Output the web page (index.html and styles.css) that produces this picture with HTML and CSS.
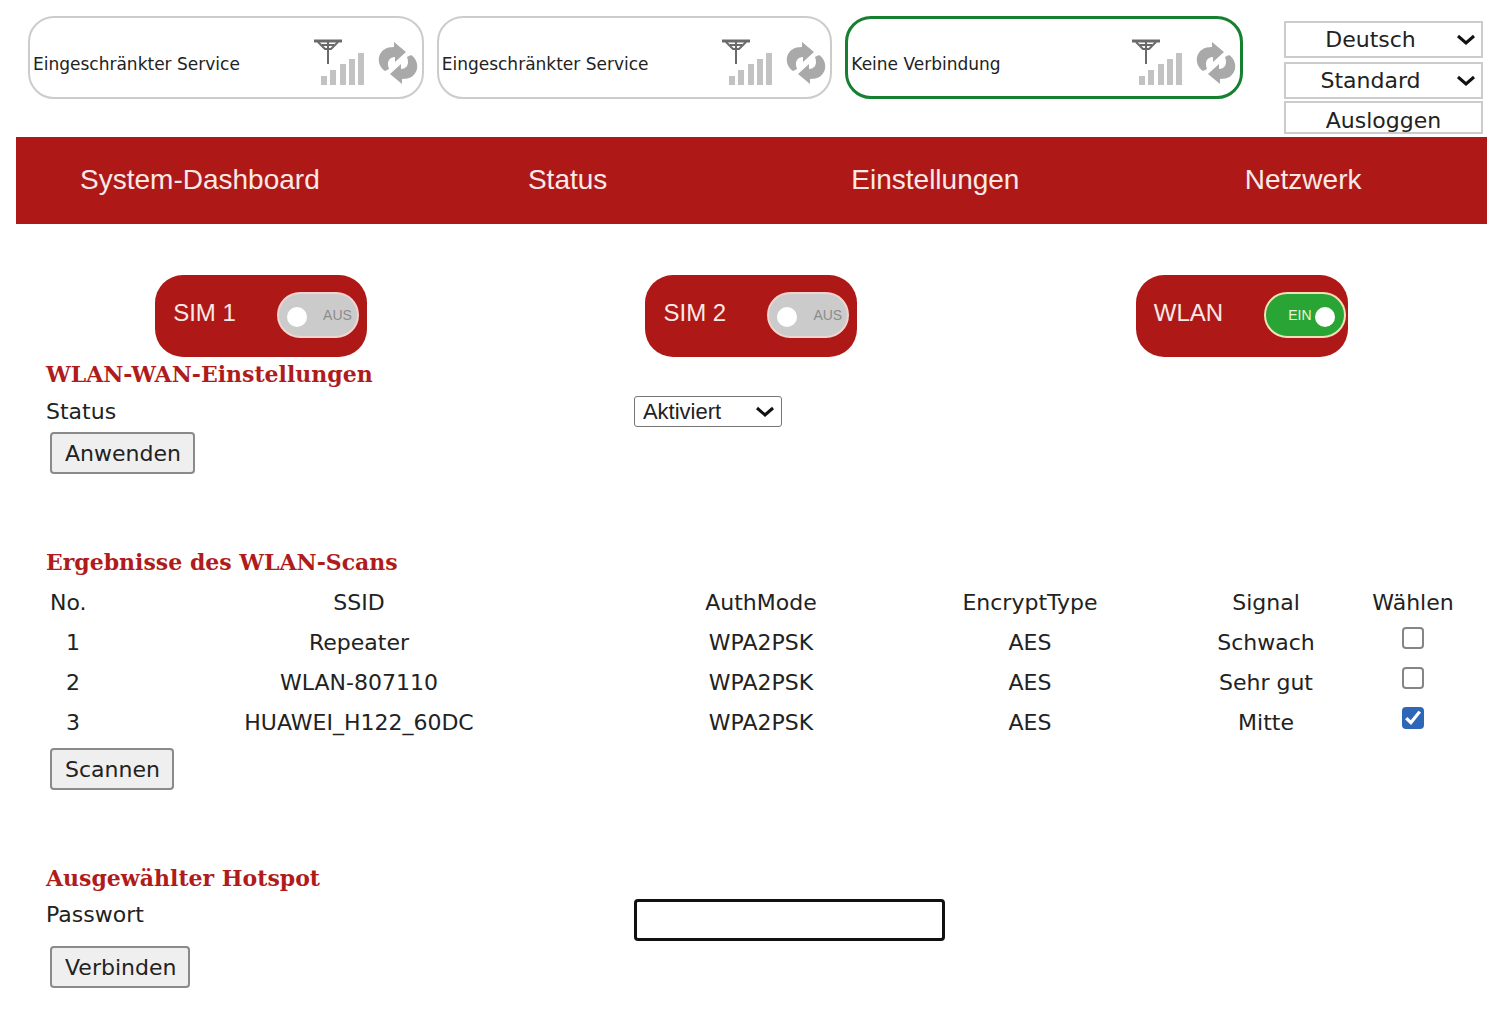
FILE: index.html
```html
<!DOCTYPE html>
<html lang="de">
<head>
<meta charset="utf-8">
<title>WLAN-WAN-Einstellungen</title>
<link rel="stylesheet" href="styles.css">
</head>
<body>
<svg class="sprite" aria-hidden="true">
  <symbol id="antenna" viewBox="0 0 52 48">
    <g fill="none" stroke="#6a6a6a">
      <path stroke-width="3" d="M0 2h28"/>
      <path stroke-width="2" d="M4 3l7 7h6l7-7M14 2v23M8 6h12"/>
    </g>
    <path fill="#c2c2c2" d="M7 37h6v9H7zM16 31h6v15h-6zM26 25h6v21h-6zM35 20h6v26h-6zM44 14h6v32h-6z"/>
  </symbol>
  <symbol id="refresh" viewBox="0 0 40 42">
    <g fill="#a9a9a9">
      <path d="M7 29C2 26 0 20 1 15C3 8 8 5 16 5V0L28 10L17 20V15C12 15 8 19 11 27Z"/>
      <path transform="rotate(180 20 21)" d="M7 29C2 26 0 20 1 15C3 8 8 5 16 5V0L28 10L17 20V15C12 15 8 19 11 27Z"/>
    </g>
  </symbol>
  <symbol id="chevron" viewBox="0 0 18 12">
    <path fill="none" stroke="#111" stroke-width="3" d="M1 2l8 7 8-7"/>
  </symbol>
</svg>
<div class="page">
  <header class="top">
    <div class="link-card">
      <span>Eingeschränkter Service</span>
      <svg class="signal"><use href="#antenna"/></svg>
      <svg class="refresh"><use href="#refresh"/></svg>
    </div>
    <div class="link-card">
      <span>Eingeschränkter Service</span>
      <svg class="signal"><use href="#antenna"/></svg>
      <svg class="refresh"><use href="#refresh"/></svg>
    </div>
    <div class="link-card active">
      <span>Keine Verbindung</span>
      <svg class="signal"><use href="#antenna"/></svg>
      <svg class="refresh"><use href="#refresh"/></svg>
    </div>
    <div class="session">
      <div class="picker">
        <select aria-label="Sprache"><option>Deutsch</option></select>
        <svg class="chevron"><use href="#chevron"/></svg>
      </div>
      <div class="picker">
        <select aria-label="Modus"><option>Standard</option></select>
        <svg class="chevron"><use href="#chevron"/></svg>
      </div>
      <button class="logout" type="button">Ausloggen</button>
    </div>
  </header>

  <nav class="menu">
    <a href="#dashboard">System-Dashboard</a>
    <a href="#status">Status</a>
    <a href="#einstellungen">Einstellungen</a>
    <a href="#netzwerk">Netzwerk</a>
  </nav>

  <div class="interfaces">
    <div class="iface">
      <span id="sim1">SIM 1</span>
      <button class="switch" type="button" role="switch" aria-checked="false" aria-labelledby="sim1"><i></i>AUS</button>
    </div>
    <div class="iface">
      <span id="sim2">SIM 2</span>
      <button class="switch" type="button" role="switch" aria-checked="false" aria-labelledby="sim2"><i></i>AUS</button>
    </div>
    <div class="iface">
      <span id="wlan">WLAN</span>
      <button class="switch" type="button" role="switch" aria-checked="true" aria-labelledby="wlan">EIN<i></i></button>
    </div>
  </div>

  <main>
    <section>
      <h2>WLAN-WAN-Einstellungen</h2>
      <div class="field">
        <label for="state">Status</label>
        <div class="picker state">
          <select id="state"><option>Aktiviert</option></select>
          <svg class="chevron"><use href="#chevron"/></svg>
        </div>
      </div>
      <button class="action" type="button">Anwenden</button>
    </section>

    <section>
      <h2>Ergebnisse des WLAN-Scans</h2>
      <table>
        <colgroup><col class="c-no"><col class="c-ssid"><col class="c-auth"><col class="c-enc"><col class="c-sig"><col class="c-pick"></colgroup>
        <thead>
          <tr><th>No.</th><th>SSID</th><th>AuthMode</th><th>EncryptType</th><th>Signal</th><th>Wählen</th></tr>
        </thead>
        <tbody>
          <tr><td>1</td><td>Repeater</td><td>WPA2PSK</td><td>AES</td><td>Schwach</td><td><input type="checkbox" aria-label="Repeater wählen"></td></tr>
          <tr><td>2</td><td>WLAN-807110</td><td>WPA2PSK</td><td>AES</td><td>Sehr gut</td><td><input type="checkbox" aria-label="WLAN-807110 wählen"></td></tr>
          <tr><td>3</td><td>HUAWEI_H122_60DC</td><td>WPA2PSK</td><td>AES</td><td>Mitte</td><td><input type="checkbox" aria-label="HUAWEI_H122_60DC wählen" checked></td></tr>
        </tbody>
      </table>
      <button class="action" type="button">Scannen</button>
    </section>

    <section>
      <h2>Ausgewählter Hotspot</h2>
      <div class="field tall">
        <label for="password">Passwort</label>
        <input id="password" class="password" type="password">
      </div>
      <button class="action" type="button">Verbinden</button>
    </section>
  </main>
</div>
</body>
</html>
```

FILE: styles.css
```css
* { box-sizing: border-box; }

body {
  margin: 0;
  background: #fff;
  color: #222;
  font: 22px/30px Verdana, "DejaVu Sans", sans-serif;
}

button, select, input { font: inherit; color: inherit; margin: 0; }

.sprite { display: none; }

.page { padding: 16px 13px 20px 16px; }

/* Connection overview and session controls */
.top {
  display: flex;
  align-items: flex-start;
  gap: 13px;
  padding: 0 4px 0 12px;
}

.link-card {
  flex: 1;
  display: flex;
  align-items: center;
  height: 83px;
  padding: 10px 4px 0 3px;
  border: 2px solid #ccc;
  border-radius: 26px;
  font-size: 17px;
}

.link-card span { flex: 1; padding-top: 2px; white-space: nowrap; }
.link-card.active { border: 3px solid #15802f; }

.signal { width: 52px; height: 48px; margin-right: 12px; }
.refresh { width: 40px; height: 42px; }

.session {
  display: flex;
  flex-direction: column;
  width: 199px;
  margin: 5px 0 0 28px;
}

.picker { display: grid; align-items: center; }
.picker > * { grid-area: 1 / 1; }

.picker select {
  appearance: none;
  width: 100%;
  height: 37px;
  padding: 0 26px 0 0;
  border: 2px solid #ccc;
  background: #fff;
  text-align: center;
  text-align-last: center;
}

.session .picker { margin-bottom: 4px; }

.chevron {
  width: 18px;
  height: 12px;
  margin-right: 8px;
  justify-self: end;
  pointer-events: none;
}

.logout {
  height: 33px;
  margin-top: -2px;
  padding: 5px 0 0;
  border: 2px solid #ccc;
  background: #fff;
  line-height: 26px;
}

/* Main menu */
.menu {
  display: grid;
  grid-template-columns: repeat(4, 1fr);
  margin-top: 3px;
  padding: 25px 0 26px;
  background: #ae1917;
  font: 28px/36px Arial, "Liberation Sans", sans-serif;
  text-align: center;
}

.menu a { color: #f8e8e6; text-decoration: none; }

/* Interface switches */
.interfaces {
  display: grid;
  grid-template-columns: repeat(3, 1fr);
  justify-items: center;
  padding-top: 51px;
  font-family: Arial, "Liberation Sans", sans-serif;
}

.iface {
  display: flex;
  align-items: center;
  gap: 41px;
  width: 212px;
  height: 82px;
  padding: 0 0 2px 18px;
  border-radius: 28px;
  background: #ae1917;
  color: #f8e8e6;
  font-size: 24px;
}

.iface span { padding-bottom: 4px; }

.switch {
  display: flex;
  align-items: center;
  justify-content: space-between;
  flex: none;
  width: 82px;
  height: 46px;
  padding: 0 5px 0 8px;
  border: 2px solid #f3d3cf;
  border-radius: 23px;
  background: #cbcbcb;
  color: #8b8b8b;
  font-size: 14px;
}

.switch i {
  width: 20px;
  height: 20px;
  margin-top: 4px;
  border-radius: 50%;
  background: #fff;
}

.switch[aria-checked="true"] {
  padding: 0 9px 0 22px;
  border-color: #f3e0b8;
  background: #29a535;
  color: #e9f5d8;
}

/* Page content */
main { padding: 2px 30px 0; }
section { margin-bottom: 73px; }
section:last-child { margin-bottom: 0; }

h2 {
  margin: 0;
  color: #b01c1c;
  font: bold 22px/30px Georgia, "DejaVu Serif", serif;
}

.field {
  display: grid;
  grid-template-columns: 5fr 7fr;
  align-items: start;
  padding-top: 7px;
  height: 43px;
}

.field label { padding-top: 1px; }

.field.tall { height: 53px; padding-top: 6px; }

.picker.state { width: 148px; font-family: Arial, "Liberation Sans", sans-serif; }

.picker.state select {
  height: 31px;
  padding: 0 30px 0 8px;
  border: 1px solid #767676;
  border-radius: 3px;
  text-align: left;
  text-align-last: left;
}

.password {
  width: 311px;
  height: 42px;
  padding: 0 8px;
  border: 3px solid #111;
  border-radius: 4px;
  background: #fff;
}

.action {
  display: block;
  height: 42px;
  margin-left: 4px;
  padding: 1px 12px 0 13px;
  border: 2px solid #8a8a8a;
  border-radius: 4px;
  background: #efefef;
}

/* Scan results */
table {
  width: calc(100% - 7px);
  margin: 6px 0 5px 4px;
  border-collapse: collapse;
  table-layout: fixed;
}

th, td {
  height: 40px;
  padding: 0;
  font-weight: normal;
  text-align: center;
}

th:first-child { text-align: left; }

.c-no { width: 46px; }
.c-ssid { width: 526px; }
.c-auth { width: 278px; }
.c-enc { width: 260px; }
.c-sig { width: 212px; }
.c-pick { width: 82px; }

td input {
  appearance: none;
  display: grid;
  place-items: center;
  width: 22px;
  height: 22px;
  margin: 0 auto 10px;
  border: 2px solid #858585;
  border-radius: 4px;
  background: #fff;
}

td input:checked { border-color: #2f67b8; background: #2f67b8; }

td input:checked::before {
  content: "";
  width: 16px;
  height: 16px;
  background: #fff;
  clip-path: polygon(0 58%, 15% 44%, 36% 64%, 84% 4%, 100% 16%, 38% 94%);
}
```
